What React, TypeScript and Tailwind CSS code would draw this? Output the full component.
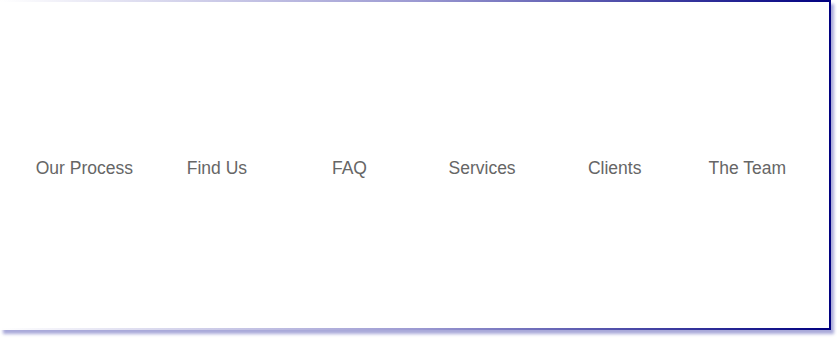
const links = ['Our Process', 'Find Us', 'FAQ', 'Services', 'Clients', 'The Team']

export default function App() {
  return (
    <div className="w-[837px] h-[340px] bg-white">
      {/* framed nav box: gradient top/bottom edges, navy right edge, soft drop shadow */}
      <div className="w-[831px] h-[330px] pt-[2px] pb-[2px] pr-[2px] bg-[linear-gradient(to_right,#ffffff,#9c9ad2_50%,#000080)] shadow-[3px_4px_3px_rgba(40,40,160,0.4)]">
        <div className="h-full bg-white flex items-center pl-[18px]">
          <nav className="grid grid-cols-[repeat(6,132.6px)] mt-[6px]">
            {links.map((label) => (
              <a
                key={label}
                href="#"
                className="text-center text-[17.5px] text-[#666666] font-['Liberation_Sans',Arial,sans-serif]"
              >
                {label}
              </a>
            ))}
          </nav>
        </div>
      </div>
    </div>
  )
}
